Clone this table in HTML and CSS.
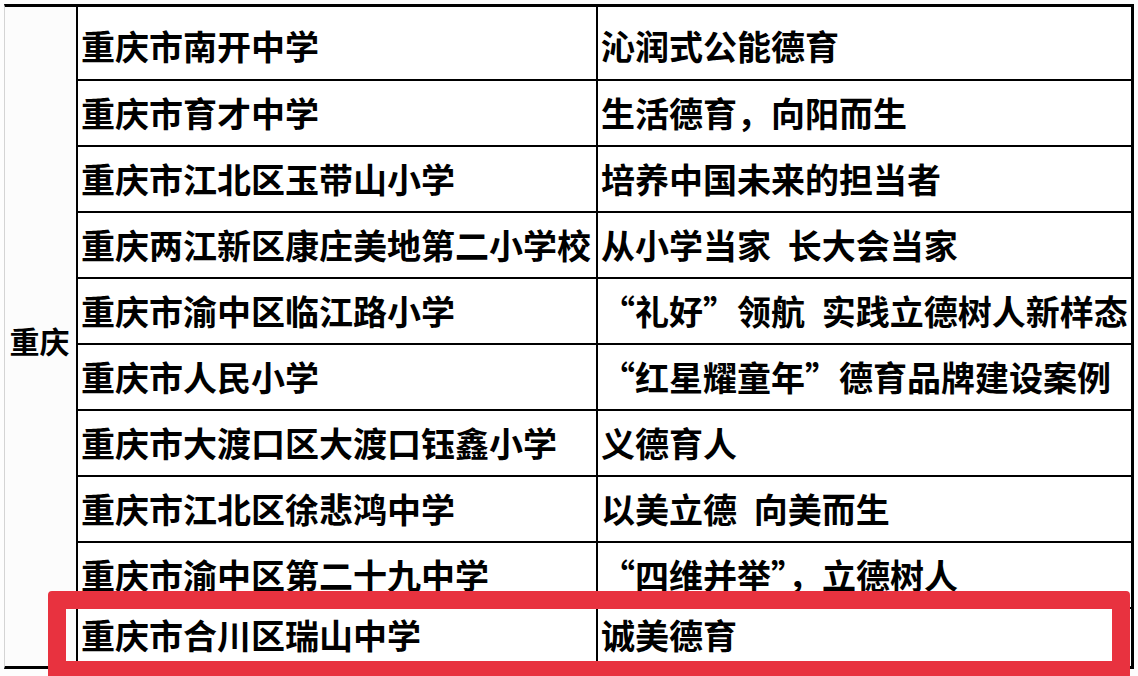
FILE: index.html
```html
<!DOCTYPE html>
<html lang="zh-CN">
<head>
<meta charset="utf-8">
<title>重庆 德育案例</title>
<link rel="stylesheet" href="styles.css">
</head>
<body>
<div class="sheet">
  <div class="tbl">
    <div class="region">重庆</div>
    <div class="cell c2 first">重庆市南开中学</div>
    <div class="cell c3 first">沁润式公能德育</div>
    <div class="cell c2">重庆市育才中学</div>
    <div class="cell c3">生活德育，向阳而生</div>
    <div class="cell c2">重庆市江北区玉带山小学</div>
    <div class="cell c3">培养中国未来的担当者</div>
    <div class="cell c2">重庆两江新区康庄美地第二小学校</div>
    <div class="cell c3">从小学当家 长大会当家</div>
    <div class="cell c2">重庆市渝中区临江路小学</div>
    <div class="cell c3">“礼好”领航 实践立德树人新样态</div>
    <div class="cell c2">重庆市人民小学</div>
    <div class="cell c3">“红星耀童年”德育品牌建设案例</div>
    <div class="cell c2">重庆市大渡口区大渡口钰鑫小学</div>
    <div class="cell c3">义德育人</div>
    <div class="cell c2">重庆市江北区徐悲鸿中学</div>
    <div class="cell c3">以美立德 向美而生</div>
    <div class="cell c2">重庆市渝中区第二十九中学</div>
    <div class="cell c3">“四维并举”，立德树人</div>
    <div class="cell c2 last">重庆市合川区瑞山中学</div>
    <div class="cell c3 last">诚美德育</div>
  </div>
  <div class="highlight"></div>
</div>
</body>
</html>
```

FILE: styles.css
```css
html, body {
  margin: 0;
  padding: 0;
  background: #fdfdfd;
  overflow: hidden;
}

.sheet {
  position: relative;
  width: 1138px;
  height: 676px;
  padding: 4px 0 0 4px;
  box-sizing: border-box;
  font-family: "Noto Sans CJK SC", "Noto Sans", sans-serif;
  color: #000;
}

.tbl {
  display: grid;
  grid-template-columns: 73px 520px 533px;
  grid-template-rows: 74px repeat(8, 66px) 57px;
  border-top: 3px solid #000;
  border-right: 3px solid #000;
  border-bottom: 3px solid #000;
  border-left: 1px solid #d4d4d4;
  width: max-content;
  background: #fff;
}

.region {
  grid-column: 1;
  grid-row: 1 / span 10;
  border-right: 2px solid #000;
  display: flex;
  align-items: center;
  justify-content: center;
  padding-top: 6px;
  padding-right: 2px;
  font-size: 30px;
  font-weight: 700;
  line-height: 30px;
  background: #fcfcfc;
}

.cell {
  display: flex;
  align-items: flex-end;
  padding: 0 0 15px 3px;
  border-bottom: 2px solid #000;
  font-size: 34px;
  font-weight: 700;
  line-height: 34px;
  white-space: nowrap;
  overflow: hidden;
  word-spacing: 9px;
  box-sizing: border-box;
}

.c2 {
  border-right: 2px solid #000;
}

.cell.last {
  border-bottom: none;
  padding-bottom: 14px;
}

.cell.first {
  padding-bottom: 16px;
}

.highlight {
  position: absolute;
  left: 48px;
  top: 591px;
  width: 1046px;
  height: 52px;
  border: 18px solid #e8323f;
  border-radius: 4px;
}
```
